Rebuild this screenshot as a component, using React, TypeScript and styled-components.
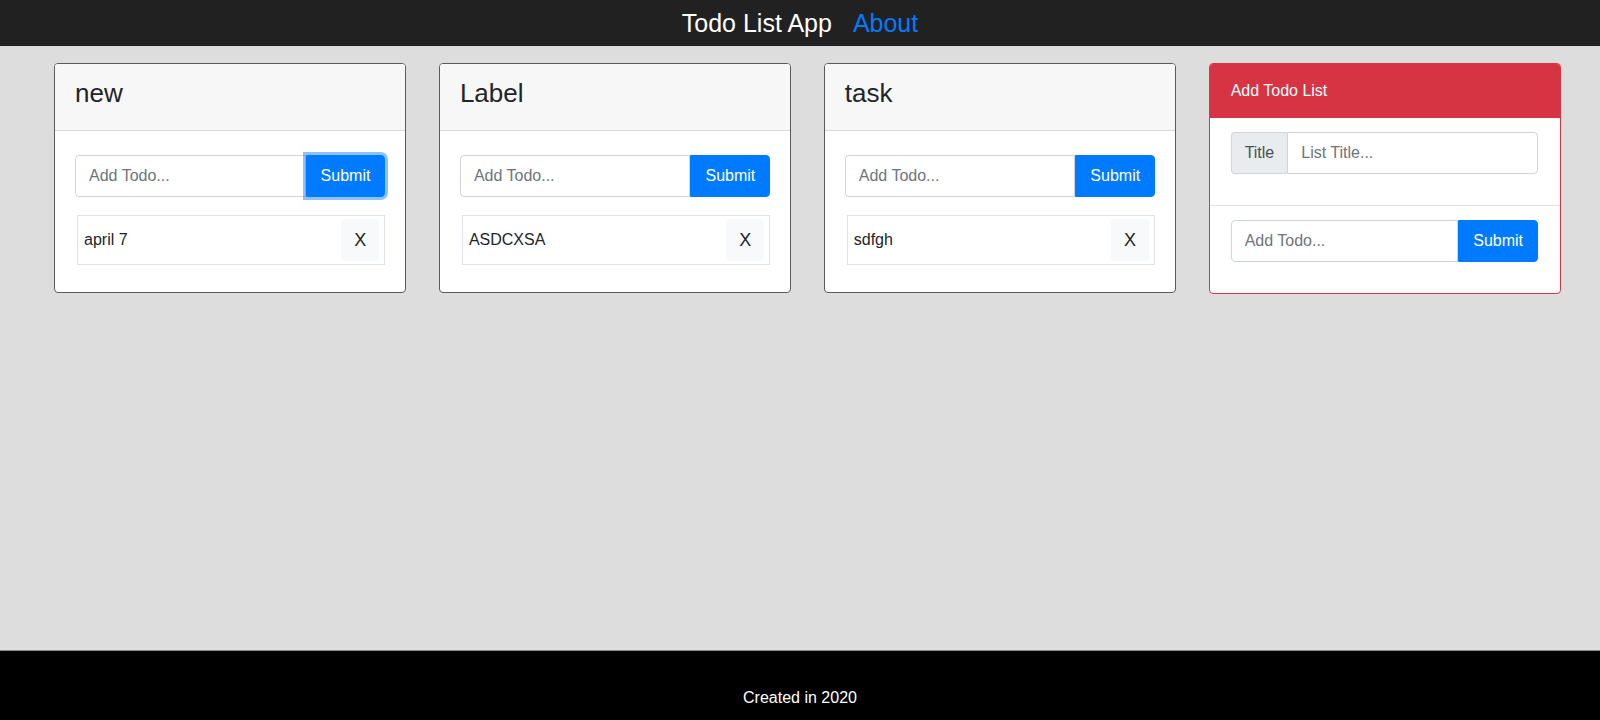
import React from 'react';
import styled, {createGlobalStyle} from 'styled-components';

const GlobalStyle = createGlobalStyle`
	* {
		box-sizing: border-box;
	}
	body {
		margin: 0;
		font-family: "Liberation Sans", Arial, sans-serif;
		font-size: 16px;
		color: #212529;
		background: #dddddd;
	}
`;

const Page = styled.div`
	min-height: 100vh;
	display: flex;
	flex-direction: column;
`;

const NavBar = styled.nav`
	height: 46px;
	background: #212121;
	display: flex;
	justify-content: center;
	align-items: center;
	gap: 21px;
	font-size: 25px;
`;

const Brand = styled.span`
	color: #ffffff;
`;

const NavLink = styled.a`
	color: #007bff;
	text-decoration: none;
	cursor: pointer;
`;

const Board = styled.main`
	flex: 1;
	display: grid;
	grid-template-columns: repeat(4, 1fr);
	column-gap: 32.5px;
	align-items: start;
	padding: 17px 39px 0 54px;
`;

const Card = styled.div<{$accent?: boolean}>`
	background: #ffffff;
	border: 1px solid ${(p) => (p.$accent ? '#dc3545' : '#5a5a5a')};
	border-radius: 4px;
	overflow: hidden;
`;

const CardHeader = styled.div`
	height: 67px;
	display: flex;
	align-items: center;
	padding: 0 20px 7px;
	background: #f7f7f7;
	border-bottom: 1px solid #d9d9d9;
	font-size: 26px;
	color: #212529;
`;

const DangerHeader = styled.div`
	height: 54px;
	display: flex;
	align-items: center;
	padding: 0 21px;
	background: #d63343;
	color: #ffffff;
	font-size: 16px;
`;

const CardBody = styled.div`
	padding: 24px 20px 27px;
`;

const Section = styled.div<{$divided?: boolean}>`
	padding: 14px 22px 31px 21px;
	border-top: ${(p) => (p.$divided ? '1px solid #dee2e6' : 'none')};
`;

const InputGroup = styled.div`
	display: flex;
	height: 42px;
`;

const TextInput = styled.input<{$joined?: boolean}>`
	flex: 1;
	min-width: 0;
	height: 100%;
	padding: 0 13px;
	border: 1px solid #ced4da;
	border-radius: ${(p) => (p.$joined ? '0 4px 4px 0' : '4px 0 0 4px')};
	font-family: inherit;
	font-size: 16px;
	color: #495057;
	background: #ffffff;
	outline: none;
	&::placeholder {
		color: #6c757d;
	}
`;

const Addon = styled.span`
	display: flex;
	align-items: center;
	padding: 0 13px;
	background: #e9ecef;
	border: 1px solid #ced4da;
	border-right: none;
	border-radius: 4px 0 0 4px;
	color: #495057;
	font-size: 16px;
`;

const SubmitButton = styled.button<{$focused?: boolean}>`
	height: 100%;
	padding: 0 14px;
	background: #007bff;
	border: 1px solid #007bff;
	border-radius: 0 4px 4px 0;
	color: #ffffff;
	font-family: inherit;
	font-size: 16px;
	cursor: pointer;
	box-shadow: ${(p) => (p.$focused ? '0 0 0 3px rgba(0, 123, 255, 0.45)' : 'none')};
`;

const TodoRow = styled.div`
	margin: 18px 0 0 2px;
	height: 50px;
	display: flex;
	align-items: center;
	justify-content: space-between;
	padding: 3px 5px 3px 6px;
	border: 1px solid #dee2e6;
	font-size: 16px;
	color: #212529;
`;

const RemoveButton = styled.button`
	width: 38px;
	height: 42px;
	border: none;
	border-radius: 4px;
	background: #f8f9fa;
	color: #212529;
	font-family: inherit;
	font-size: 18px;
	cursor: pointer;
`;

const Footer = styled.footer`
	height: 70px;
	padding-top: 38px;
	background: #000000;
	border-top: 1px solid #8a8a8a;
	color: #ffffff;
	text-align: center;
	font-size: 16px;
`;

type TodoList = {title: string; items: string[]};

const LISTS: TodoList[] = [
	{title: 'new', items: ['april 7']},
	{title: 'Label', items: ['ASDCXSA']},
	{title: 'task', items: ['sdfgh']},
];

const ListCard = ({list, focused}: {list: TodoList; focused: boolean}) => (
	<Card>
		<CardHeader>{list.title}</CardHeader>
		<CardBody>
			<InputGroup>
				<TextInput placeholder="Add Todo..." />
				<SubmitButton $focused={focused}>Submit</SubmitButton>
			</InputGroup>
			{list.items.map((item, i) => (
				<TodoRow key={i}>
					{item}
					<RemoveButton>X</RemoveButton>
				</TodoRow>
			))}
		</CardBody>
	</Card>
);

const App = () => {
	return (
		<Page>
			<GlobalStyle />
			<NavBar>
				<Brand>Todo List App</Brand>
				<NavLink>About</NavLink>
			</NavBar>
			<Board>
				{LISTS.map((list, i) => (
					<ListCard key={i} list={list} focused={i === 0} />
				))}
				<Card $accent>
					<DangerHeader>Add Todo List</DangerHeader>
					<Section>
						<InputGroup>
							<Addon>Title</Addon>
							<TextInput $joined placeholder="List Title..." />
						</InputGroup>
					</Section>
					<Section $divided>
						<InputGroup>
							<TextInput placeholder="Add Todo..." />
							<SubmitButton>Submit</SubmitButton>
						</InputGroup>
					</Section>
				</Card>
			</Board>
			<Footer>Created in 2020</Footer>
		</Page>
	);
};

export default App;
